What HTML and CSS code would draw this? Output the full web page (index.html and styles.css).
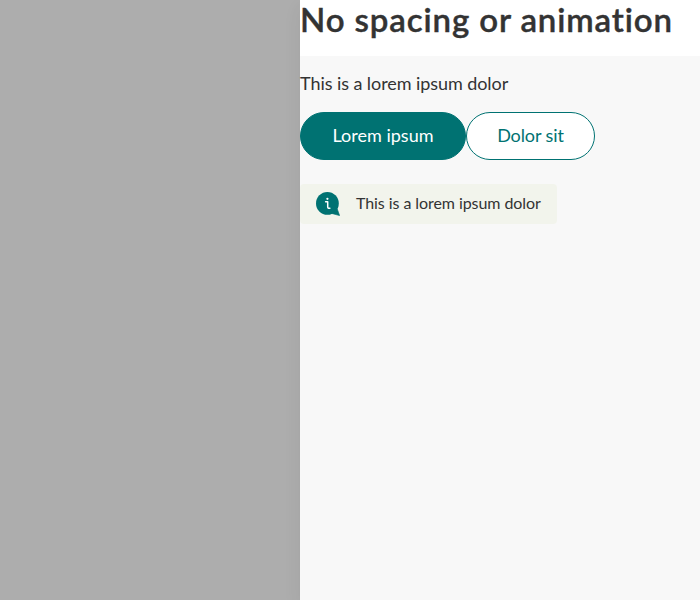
FILE: index.html
```html
<!DOCTYPE html>
<html lang="en">
<head>
<meta charset="utf-8">
<title>Drawer</title>
<link rel="stylesheet" href="styles.css">
</head>
<body>
<div class="overlay">
  <main class="drawer">
    <header class="drawer-header"><h1>No spacing or animation</h1></header>
    <section class="drawer-body">
      <p class="lead">This is a lorem ipsum dolor</p>
      <div class="buttons">
        <button class="button primary">Lorem ipsum</button>
        <button class="button secondary">Dolor sit</button>
      </div>
      <div class="status">
        <svg class="status-icon" width="24" height="24" viewBox="0 0 24 24" fill="none" aria-hidden="true">
          <circle cx="11.4" cy="11.4" r="11.4" fill="#007272"/>
          <path d="M21.3 17 23.6 23.6 15.5 21.4Z" fill="#007272" stroke="#007272" stroke-width=".6" stroke-linejoin="round"/>
          <path d="M9.6 9.7h2.1v5c0 1.3.7 1.8 2.2 1.5" stroke="#fff" stroke-width="1.5" stroke-linecap="round" stroke-linejoin="round"/>
          <circle cx="11.4" cy="6.8" r="1.1" fill="#fff"/>
        </svg>
        <p>This is a lorem ipsum dolor</p>
      </div>
    </section>
  </main>
</div>
</body>
</html>
```
FILE: styles.css
```css
* { box-sizing: border-box; }
body {
  margin: 0;
  color: #333;
  font-family: Lato, "Noto Sans", sans-serif;
  font-variant-ligatures: none;
}
.overlay {
  display: flex;
  justify-content: flex-end;
  height: 600px;
  overflow: hidden;
  background: #adadad;
}
.drawer {
  width: 400px;
  background: #f8f8f8;
  box-shadow: 0 8px 16px rgba(51, 51, 51, 0.08);
}
.drawer-header {
  height: 56px;
  background: #fff;
}
h1 {
  margin: 0;
  font-size: 33px;
  line-height: 39px;
  font-weight: 600;
  letter-spacing: 0.88px;
  -webkit-text-stroke: 0.4px #333;
  white-space: nowrap;
}
p { margin: 0; white-space: nowrap; }
.drawer-body { padding-top: 16px; }
.lead {
  height: 24px;
  font-size: 18px;
  line-height: 22px;
  letter-spacing: -0.07px;
}
.buttons {
  display: flex;
  margin-top: 16px;
}
.button {
  height: 48px;
  padding: 0 0 2px;
  border: 1px solid #007272;
  border-radius: 24px;
  font: 18px/24px Lato, "Noto Sans", sans-serif;
  font-variant-ligatures: none;
  white-space: nowrap;
}
.primary {
  width: 166px;
  background: #007272;
  color: #fff;
}
.secondary {
  width: 129px;
  background: #fff;
  color: #007272;
  letter-spacing: -0.1px;
}
.status {
  display: flex;
  align-items: center;
  gap: 16px;
  width: 257px;
  height: 40px;
  margin-top: 24px;
  padding-left: 16px;
  border-radius: 4px;
  background: #f2f4ec;
  font-size: 16px;
  line-height: 24px;
  letter-spacing: -0.07px;
}
.status p { padding-bottom: 2px; }
.status-icon { flex: none; }
```
